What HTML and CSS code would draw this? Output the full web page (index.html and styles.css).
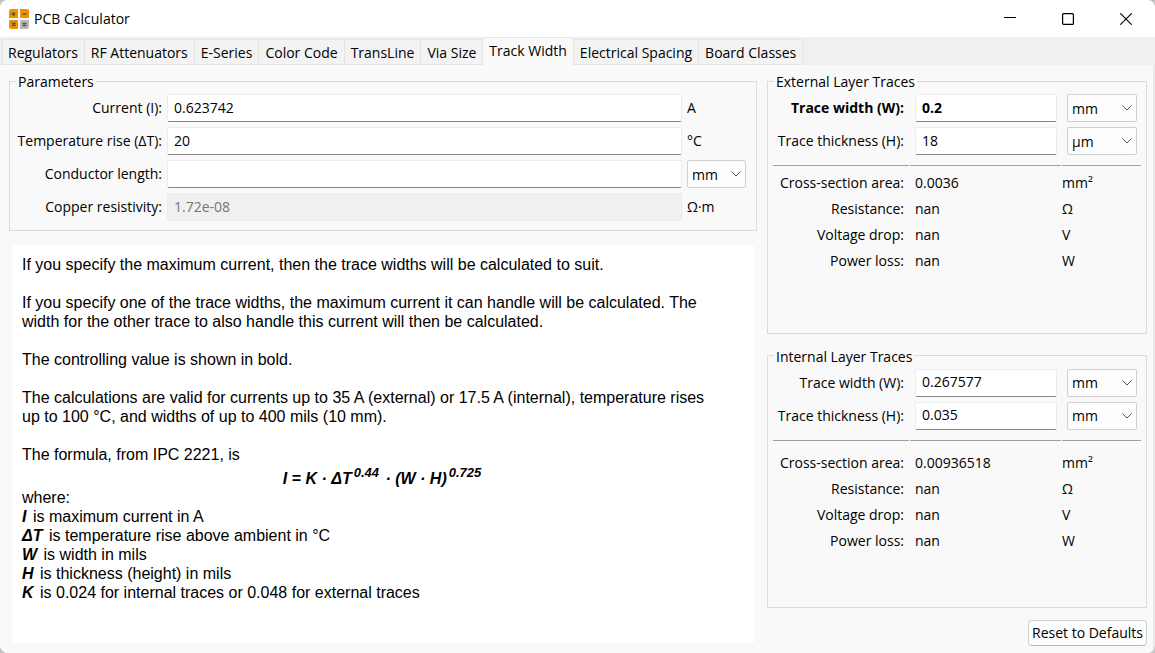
FILE: index.html
```html
<!DOCTYPE html>
<html lang="en">
<head>
<meta charset="utf-8">
<title>PCB Calculator</title>
<link rel="stylesheet" href="styles.css">
</head>
<body>
<div class="window">
  <header class="titlebar">
    <svg class="app-icon" width="20" height="20" viewBox="0 0 20 20" aria-hidden="true">
      <path d="M2 0h7v9H0V2a2 2 0 0 1 2-2z" fill="#f29100"/>
      <path d="M11 0h7a2 2 0 0 1 2 2v7h-9z" fill="#f29100"/>
      <path d="M0 11h9v9H2a2 2 0 0 1-2-2z" fill="#f29100"/>
      <path d="M11 11h9v7a2 2 0 0 1-2 2h-7z" fill="#b9b9b9"/>
      <path d="M2.500 5h4M4.500 3v4M13.500 5h4M3 13.500l3.500 3.500M6.500 13.500L3 17M13.500 14.500h4M13.500 16.500h4" stroke="#545454" stroke-width="1.500" fill="none"/>
    </svg>
    <h1 class="title">PCB Calculator</h1>
    <div class="window-buttons">
      <button class="window-button" type="button" aria-label="Minimize">
        <svg width="12" height="12" viewBox="0 0 12 12"><path d="M0 4.500h12" stroke="#000" fill="none"/></svg>
      </button>
      <button class="window-button" type="button" aria-label="Maximize">
        <svg width="12" height="12" viewBox="0 0 12 12"><rect x=".6" y=".6" width="10.800" height="10.800" rx="1" stroke="#000" stroke-width="1.200" fill="none"/></svg>
      </button>
      <button class="window-button" type="button" aria-label="Close">
        <svg width="12" height="12" viewBox="0 0 12 12"><path d="M.3.300l11.400 11.400M11.700.300L.3 11.700" stroke="#000" stroke-width="1.100" fill="none"/></svg>
      </button>
    </div>
  </header>

  <nav class="tabs" role="tablist">
    <button class="tab" type="button" role="tab">Regulators</button>
    <button class="tab" type="button" role="tab">RF Attenuators</button>
    <button class="tab" type="button" role="tab">E-Series</button>
    <button class="tab" type="button" role="tab">Color Code</button>
    <button class="tab" type="button" role="tab">TransLine</button>
    <button class="tab" type="button" role="tab">Via Size</button>
    <button class="tab tab-active" type="button" role="tab" aria-selected="true">Track Width</button>
    <button class="tab" type="button" role="tab">Electrical Spacing</button>
    <button class="tab" type="button" role="tab">Board Classes</button>
  </nav>

  <main class="page">
    <div class="left">
      <fieldset class="group params">
        <legend>Parameters</legend>
        <div class="params-grid">
          <label for="current">Current (I):</label>
          <input id="current" class="field" type="text" value="0.623742">
          <span>A</span>
          <label for="rise">Temperature rise (ΔT):</label>
          <input id="rise" class="field" type="text" value="20">
          <span>°C</span>
          <label for="length">Conductor length:</label>
          <input id="length" class="field" type="text" value="">
          <div class="combo">
            <select aria-label="Conductor length unit"><option>mm</option></select>
            <svg class="chevron" width="10" height="6" viewBox="0 0 10 6"><path d="M.5.500L5 5 9.500.500" stroke="#555" fill="none"/></svg>
          </div>
          <label for="resistivity">Copper resistivity:</label>
          <input id="resistivity" class="field" type="text" value="1.72e-08" disabled>
          <span>Ω·m</span>
        </div>
      </fieldset>

      <article class="help">
        <p>If you specify the maximum current, then the trace widths will be calculated to suit.</p>
        <p>If you specify one of the trace widths, the maximum current it can handle will be calculated. The width for the other trace to also handle this current will then be calculated.</p>
        <p>The controlling value is shown in bold.</p>
        <p>The calculations are valid for currents up to 35 A (external) or 17.5 A (internal), temperature rises up to 100 °C, and widths of up to 400 mils (10 mm).</p>
        <div>The formula, from IPC 2221, is</div>
        <div class="formula">I = K · ΔT<sup>0.44</sup> · (W · H)<sup>0.725</sup></div>
        <div>where:</div>
        <div><b>I</b> is maximum current in A</div>
        <div><b>ΔT</b> is temperature rise above ambient in °C</div>
        <div><b>W</b> is width in mils</div>
        <div><b>H</b> is thickness (height) in mils</div>
        <div><b>K</b> is 0.024 for internal traces or 0.048 for external traces</div>
      </article>
    </div>

    <div class="right">
      <fieldset class="group layer">
        <legend>External Layer Traces</legend>
        <div class="layer-grid inputs">
          <label class="controlling" for="ext-w">Trace width (W):</label>
          <div class="cell"><input id="ext-w" class="field controlling" type="text" value="0.2"></div>
          <div class="cell"><div class="combo">
            <select aria-label="External trace width unit"><option>mm</option></select>
            <svg class="chevron" width="10" height="6" viewBox="0 0 10 6"><path d="M.5.500L5 5 9.500.500" stroke="#555" fill="none"/></svg>
          </div></div>
          <label for="ext-h">Trace thickness (H):</label>
          <div class="cell"><input id="ext-h" class="field" type="text" value="18"></div>
          <div class="cell"><div class="combo">
            <select aria-label="External trace thickness unit"><option>µm</option></select>
            <svg class="chevron" width="10" height="6" viewBox="0 0 10 6"><path d="M.5.500L5 5 9.500.500" stroke="#555" fill="none"/></svg>
          </div></div>
        </div>
        <div class="layer-grid rules"><i></i><i></i><i></i></div>
        <div class="layer-grid results">
          <span class="name">Cross-section area:</span><output>0.0036</output><span>mm²</span>
          <span class="name">Resistance:</span><output>nan</output><span>Ω</span>
          <span class="name">Voltage drop:</span><output>nan</output><span>V</span>
          <span class="name">Power loss:</span><output>nan</output><span>W</span>
        </div>
      </fieldset>

      <fieldset class="group layer">
        <legend>Internal Layer Traces</legend>
        <div class="layer-grid inputs">
          <label for="int-w">Trace width (W):</label>
          <div class="cell"><input id="int-w" class="field" type="text" value="0.267577"></div>
          <div class="cell"><div class="combo">
            <select aria-label="Internal trace width unit"><option>mm</option></select>
            <svg class="chevron" width="10" height="6" viewBox="0 0 10 6"><path d="M.5.500L5 5 9.500.500" stroke="#555" fill="none"/></svg>
          </div></div>
          <label for="int-h">Trace thickness (H):</label>
          <div class="cell"><input id="int-h" class="field" type="text" value="0.035"></div>
          <div class="cell"><div class="combo">
            <select aria-label="Internal trace thickness unit"><option>mm</option></select>
            <svg class="chevron" width="10" height="6" viewBox="0 0 10 6"><path d="M.5.500L5 5 9.500.500" stroke="#555" fill="none"/></svg>
          </div></div>
        </div>
        <div class="layer-grid rules"><i></i><i></i><i></i></div>
        <div class="layer-grid results results-spaced">
          <span class="name">Cross-section area:</span><output>0.00936518</output><span>mm²</span>
          <span class="name">Resistance:</span><output>nan</output><span>Ω</span>
          <span class="name">Voltage drop:</span><output>nan</output><span>V</span>
          <span class="name">Power loss:</span><output>nan</output><span>W</span>
        </div>
      </fieldset>

      <button class="reset" type="button">Reset to Defaults</button>
    </div>
  </main>
</div>
</body>
</html>
```
FILE: styles.css
```css
* {
  box-sizing: border-box;
}

html {
  background: #c4c4c4;
}

body {
  margin: 0;
  font-family: "Open Sans", "Noto Sans", sans-serif;
  font-size: 14px;
  line-height: 18px;
  color: #000;
}

button,
input,
select {
  font: inherit;
  color: inherit;
  margin: 0;
}

.window {
  display: flex;
  flex-direction: column;
  min-height: 100vh;
  background: #f0f0f0;
  border-radius: 8px;
  overflow: hidden;
}

.titlebar {
  display: flex;
  align-items: center;
  height: 37px;
  padding-left: 9px;
  background: #fff;
}

.title {
  flex: 1;
  margin: 0 0 0 5px;
  font-size: 14px;
  font-weight: 400;
}

.window-buttons {
  display: flex;
}

.window-button {
  display: grid;
  place-items: center;
  width: 58px;
  height: 37px;
  padding: 0;
  border: 0;
  background: none;
}

.tabs {
  display: flex;
  align-items: flex-end;
  height: 28px;
  padding-left: 2px;
}

.tab {
  height: 26px;
  padding: 2px 6px 0;
  border: 1px solid #e5e5e5;
  border-left-width: 0;
  background: #f3f3f3;
  white-space: nowrap;
}

.tab:first-child {
  padding-left: 5px;
  border-left-width: 1px;
}

.tab-active {
  height: 28px;
  padding: 0 6px 2px;
  border-bottom: 0;
  background: #f9f9f9;
}

.page {
  flex: 1;
  display: grid;
  grid-template-columns: minmax(0, 1fr) 380px;
  gap: 10px;
  margin-right: 1px;
  padding: 6px 6px 7px 9px;
  background: #f9f9f9;
  border-right: 1px solid #e5e5e5;
}

.left,
.right {
  display: flex;
  flex-direction: column;
}

.group {
  min-width: 0;
  margin: 0;
  padding: 3px 5px 9px;
  border: 1px solid #dcdcdc;
}

.group legend {
  margin-left: 1px;
  padding: 2px 2px 0;
}

.params {
  padding-right: 10px;
}

.params-grid {
  display: grid;
  grid-template-columns: 147px minmax(0, 1fr) 59px;
  gap: 5px;
  align-items: center;
}

label,
.name {
  text-align: right;
  white-space: nowrap;
}

.field {
  display: block;
  width: 100%;
  height: 28px;
  padding: 0 6px 2px;
  border: 1px solid #ececec;
  border-bottom-color: #868686;
  border-radius: 2px;
  background: #fff;
}

.field:disabled {
  border-color: #ececec;
  background: #f0f0f0;
  color: #757575;
}

.controlling {
  font-weight: 700;
}

.combo {
  position: relative;
}

.combo select {
  display: block;
  width: 100%;
  height: 28px;
  padding: 1px 4px 0;
  border: 1px solid #d0d0d0;
  border-radius: 2px;
  background: #fdfdfd;
  appearance: none;
}

.chevron {
  position: absolute;
  top: 11px;
  right: 5px;
  pointer-events: none;
}

.help {
  flex: 1;
  margin: 14px 3px 3px;
  padding: 10px;
  background: #fff;
  font-family: "Liberation Sans", Arial, sans-serif;
  font-size: 16px;
  line-height: 19px;
}

.help p {
  margin: 0 0 19px;
  padding-right: 24px;
}

.help b {
  margin-right: 2px;
  font-style: italic;
}

.formula {
  padding-top: 5px;
  font-weight: 700;
  font-style: italic;
  text-align: center;
}

.formula sup {
  margin: 0 2px;
  font-size: 13px;
  line-height: 0;
  vertical-align: 7px;
}

.right {
  gap: 12px;
}

.layer {
  flex: 1;
}

.layer-grid {
  display: grid;
  grid-template-columns: 136px minmax(0, 1fr) 79px;
  column-gap: 1px;
  align-items: center;
}

.layer-grid label,
.layer-grid .name {
  padding-right: 5px;
}

.inputs {
  row-gap: 5px;
}

.cell {
  padding: 0 4px 0 5px;
}

.rules {
  margin: 10px 0 4px;
}

.rules i {
  height: 1px;
  background: #a0a0a0;
}

.results {
  grid-auto-rows: 26px;
}

.results output {
  padding-left: 5px;
}

.results-spaced {
  margin-top: 9px;
}

.reset {
  align-self: flex-end;
  height: 26px;
  padding: 0 3px;
  border: 1px solid #d0d0d0;
  border-bottom-color: #bababa;
  border-radius: 4px;
  background: #fdfdfd;
}
```
